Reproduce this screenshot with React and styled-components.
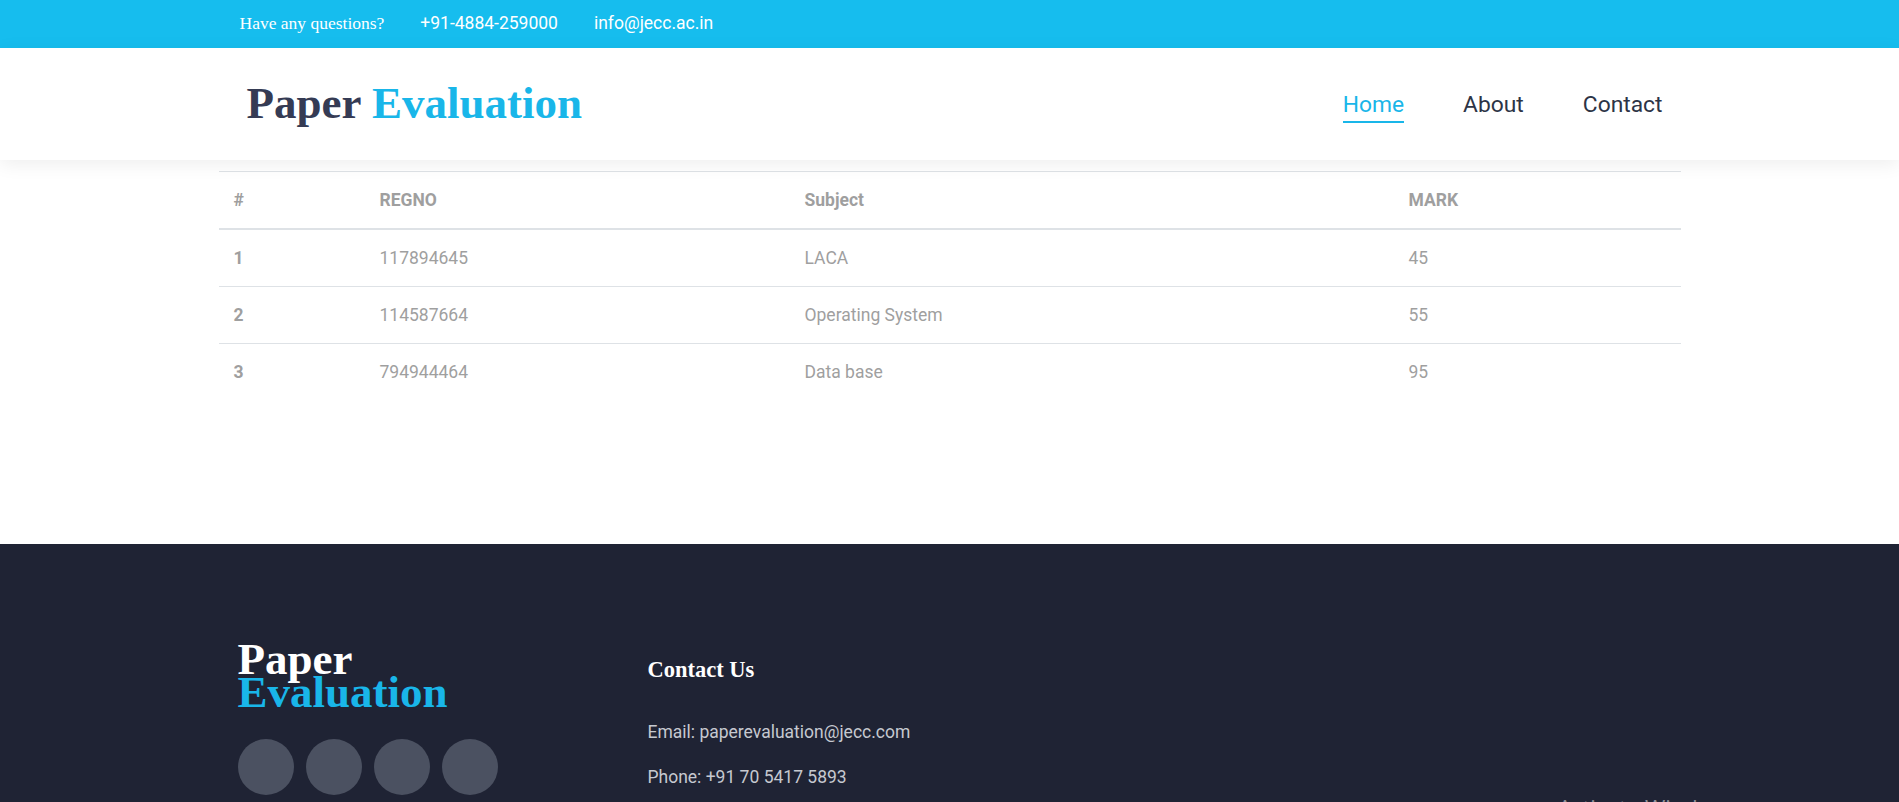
import React from "react";
import styled, { createGlobalStyle } from "styled-components";

const GlobalStyle = createGlobalStyle`
  body {
    margin: 0;
    font-family: Roboto, "Liberation Sans", sans-serif;
    background: #fff;
  }
  * { box-sizing: border-box; }
`;

const Page = styled.div`
  position: relative;
  min-height: 802px;
  overflow: hidden;
`;

const Container = styled.div`
  width: 1462px;
  margin: 0 auto;
`;

// top info bar
const TopBar = styled.div`
  background: #16bdee;
  height: 48px;
`;

const TopInner = styled(Container)`
  display: flex;
  align-items: center;
  height: 100%;
  padding-left: 21px;
  padding-bottom: 2px;
  gap: 36px;
`;

const TopText = styled.span`
  color: #fff;
  font-size: 17.5px;
  font-family: ${p => (p.serif ? `"Liberation Serif", serif` : `Roboto, sans-serif`)};
`;

// header
const Header = styled.header`
  position: relative;
  z-index: 2;
  background: #fff;
  height: 112px;
  box-shadow: 0 4px 18px rgba(0, 0, 0, 0.07);
`;

const HeaderInner = styled(Container)`
  display: flex;
  align-items: center;
  justify-content: space-between;
  height: 100%;
  padding: 0 18px 0 28px;
`;

const Logo = styled.div`
  font-family: "Liberation Serif", serif;
  font-weight: 700;
  font-size: 45px;
  color: ${p => (p.light ? "#fff" : "#353b54")};
  line-height: ${p => (p.stacked ? "33px" : "1.15")};
  span { color: #19b6e9; }
`;

const Nav = styled.nav`
  display: flex;
  gap: 59px;
`;

const NavLink = styled.a`
  font-size: 22.8px;
  line-height: 26px;
  padding: 6px 0 3px;
  color: ${p => (p.active ? "#19b6e9" : "#2d3446")};
  border-bottom: 2px solid ${p => (p.active ? "#19b6e9" : "transparent")};
  text-decoration: none;
  cursor: pointer;
`;

// results table
const Main = styled.main`
  min-height: 384px;
  padding-top: 11px;
`;

const Table = styled.table`
  width: 1462px;
  margin: 0 auto;
  border-collapse: collapse;
  color: #9f9f9f;
  font-size: 17.5px;
  line-height: 24px;
`;

const Th = styled.th`
  text-align: left;
  font-weight: 700;
  padding: 16px 15px;
  border-top: 1px solid #dee2e6;
  border-bottom: 2px solid #dee2e6;
  width: ${p => p.w}px;
`;

const Td = styled.td`
  padding: 16px 15px;
  border-top: 1px solid #dee2e6;
  font-weight: ${p => (p.bold ? 700 : 400)};
`;

// footer
const Footer = styled.footer`
  background: #1f2334;
  height: 258px;
  padding-top: 99px;
`;

const FooterInner = styled(Container)`
  display: flex;
  padding-left: 19px;
`;

const FooterCol = styled.div`
  width: ${p => p.w}px;
`;

const Socials = styled.div`
  display: flex;
  gap: 12px;
  margin-top: 30px;
`;

const Circle = styled.span`
  width: 56px;
  height: 56px;
  border-radius: 50%;
  background: #4b5161;
`;

const FooterHeading = styled.h3`
  margin: 14px 0 37px;
  font-family: "Liberation Serif", serif;
  font-size: 22.5px;
  font-weight: 700;
  color: #fff;
`;

const FooterText = styled.p`
  margin: 0 0 21px;
  font-size: 17.5px;
  line-height: 24px;
  color: #c6c9d0;
`;

const Watermark = styled.div`
  position: absolute;
  left: 1558px;
  top: 792px;
  font-family: "Open Sans", sans-serif;
  font-size: 22px;
  line-height: 30px;
  color: rgba(255, 255, 255, 0.5);
  white-space: nowrap;
`;

const rows = [
  { id: 1, regno: "117894645", subject: "LACA", mark: 45 },
  { id: 2, regno: "114587664", subject: "Operating System", mark: 55 },
  { id: 3, regno: "794944464", subject: "Data base", mark: 95 },
];

export default function App() {
  return (
    <Page>
      <GlobalStyle />
      <TopBar>
        <TopInner>
          <TopText serif>Have any questions?</TopText>
          <TopText>+91-4884-259000</TopText>
          <TopText>info@jecc.ac.in</TopText>
        </TopInner>
      </TopBar>

      <Header>
        <HeaderInner>
          <Logo>
            Paper <span>Evaluation</span>
          </Logo>
          <Nav>
            <NavLink active>Home</NavLink>
            <NavLink>About</NavLink>
            <NavLink>Contact</NavLink>
          </Nav>
        </HeaderInner>
      </Header>

      <Main>
        <Table>
          <thead>
            <tr>
              <Th w={146}>#</Th>
              <Th w={425}>REGNO</Th>
              <Th w={604}>Subject</Th>
              <Th w={287}>MARK</Th>
            </tr>
          </thead>
          <tbody>
            {rows.map(r => (
              <tr key={r.id}>
                <Td bold>{r.id}</Td>
                <Td>{r.regno}</Td>
                <Td>{r.subject}</Td>
                <Td>{r.mark}</Td>
              </tr>
            ))}
          </tbody>
        </Table>
      </Main>

      <Footer>
        <FooterInner>
          <FooterCol w={410}>
            <Logo light stacked>
              Paper
              <br />
              <span>Evaluation</span>
            </Logo>
            <Socials>
              <Circle />
              <Circle />
              <Circle />
              <Circle />
            </Socials>
          </FooterCol>
          <FooterCol w={500}>
            <FooterHeading>Contact Us</FooterHeading>
            <FooterText>Email: paperevaluation@jecc.com</FooterText>
            <FooterText>Phone: +91 70 5417 5893</FooterText>
          </FooterCol>
        </FooterInner>
      </Footer>

      <Watermark>Activate Windows</Watermark>
    </Page>
  );
}
